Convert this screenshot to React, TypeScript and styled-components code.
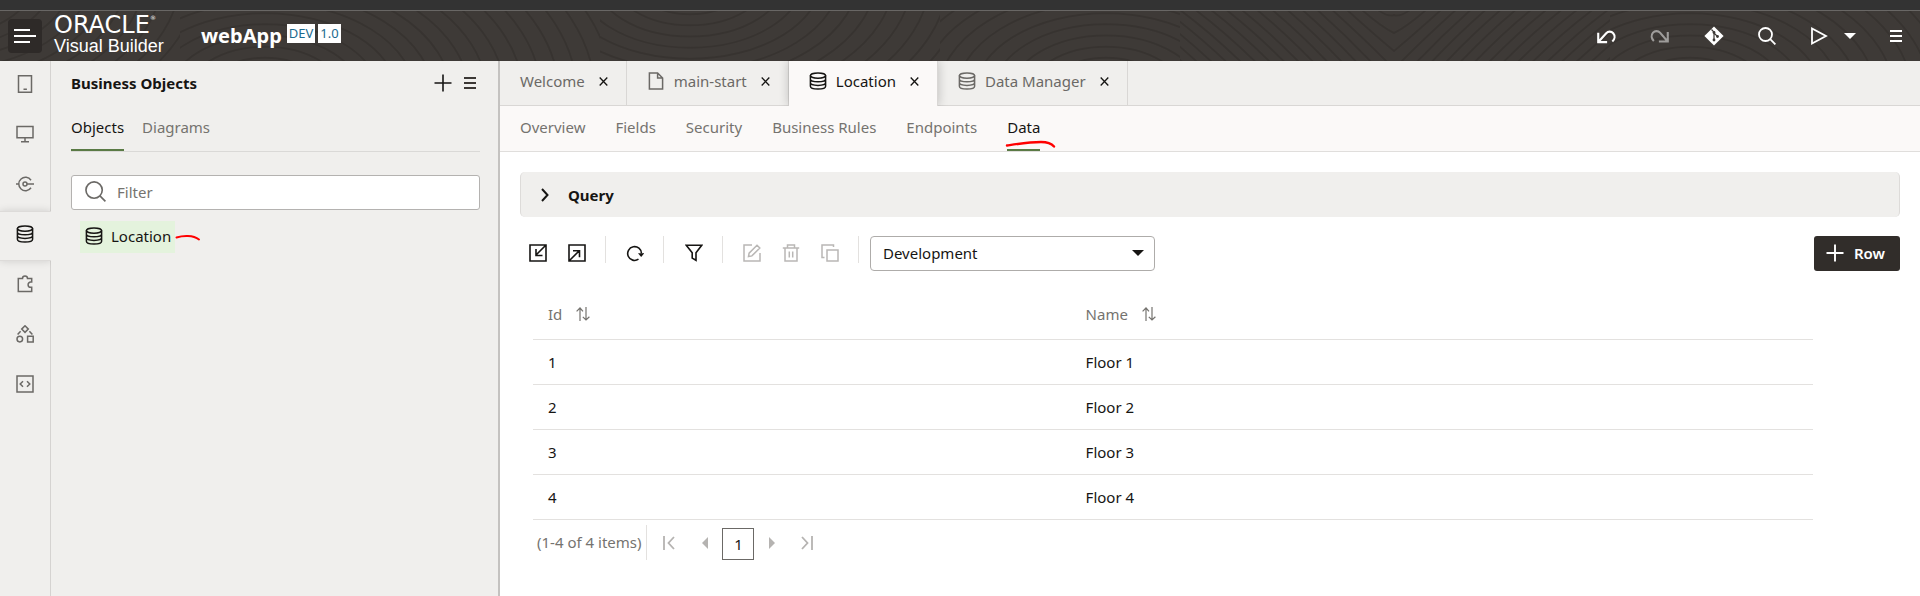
import React, { useState } from "react";
import styled, { createGlobalStyle, css } from "styled-components";

const GlobalStyle = createGlobalStyle`
  *, *::before, *::after { box-sizing: border-box; }
  body { margin: 0; background: #fff; }
  body, button, input, select {
    font-family: "Noto Sans", "Open Sans", sans-serif;
    font-size: 15px;
    line-height: 20px;
    color: #161513;
  }
  button { border: 0; padding: 0; background: none; cursor: pointer; }
  button:disabled { cursor: default; }
  svg { display: block; flex: none; }
  a { text-decoration: none; color: inherit; }
`;

const Page = styled.div`
  display: flex;
  flex-direction: column;
  min-height: 100vh;
`;

const TopStrip = styled.div`
  height: 11px;
  background: #333;
  border-bottom: 1px solid #696765;
`;

const Header = styled.header`
  position: relative;
  display: flex;
  align-items: center;
  height: 50px;
  padding: 0 18px 0 8px;
  background: #3e3a37;
  color: #fff;
`;

const Waves = styled.svg`
  position: absolute;
  inset: 0;
  width: 100%;
  height: 100%;
`;

const MenuButton = styled.button`
  position: relative;
  display: grid;
  place-items: center;
  width: 34px;
  height: 34px;
  border-radius: 4px;
  background: #2e2a28;
`;

const Brand = styled.a`
  position: relative;
  display: flex;
  flex-direction: column;
  width: 112px;
  margin-left: 12px;
  padding-bottom: 2px;
`;

const BrandName = styled.span`
  display: flex;
  font-family: "DejaVu Sans", sans-serif;
  font-size: 24px;
  line-height: 22px;
  color: #fff;
  sup { font-size: 6px; line-height: 8px; }
`;

const BrandProduct = styled.span`
  font-family: "Liberation Sans", sans-serif;
  font-size: 18px;
  line-height: 20px;
  white-space: nowrap;
`;

const AppName = styled.h1`
  position: relative;
  margin: 0 5px 0 35px;
  font-size: 20px;
  line-height: 28px;
  font-weight: 700;
`;

const Badges = styled.div`
  position: relative;
  display: flex;
  gap: 3px;
  padding-bottom: 5px;
`;

const Badge = styled.span`
  padding: 0 2px;
  background: #fff;
  color: #1c6a8e;
  font-size: 13px;
  line-height: 19px;
`;

const HeaderActions = styled.div`
  position: relative;
  display: flex;
  align-items: center;
  margin-left: auto;
  gap: 34px;
`;

const RunGroup = styled.div`
  display: flex;
  align-items: center;
  gap: 16px;
`;

const IconButton = styled.button<{ $dim?: boolean; $tone?: string }>`
  display: grid;
  place-items: center;
  color: ${(p) => p.$tone ?? "#fff"};
  opacity: ${(p) => (p.$dim ? 0.5 : 1)};
`;

const Body = styled.div`
  display: flex;
  flex: 1;
`;

const Rail = styled.nav`
  display: flex;
  flex-direction: column;
  width: 51px;
  background: #f0efed;
  border-right: 1px solid #d5d3d1;
`;

const RailButton = styled.button<{ $active?: boolean }>`
  display: grid;
  place-items: center;
  height: 50px;
  padding-bottom: 4px;
  color: #6b6966;
  ${(p) =>
    p.$active &&
    css`
      margin-right: -1px;
      padding-right: 1px;
      color: #161513;
      background: #f0efed;
      border-top: 1px solid #dddbd9;
      border-bottom: 1px solid #dddbd9;
      box-shadow: 0 0 8px rgba(0, 0, 0, 0.14);
      clip-path: inset(-10px 0 -10px 0);
    `}
`;

const Sidebar = styled.aside`
  width: 449px;
  padding: 0 18px 0 20px;
  background: #f0efed;
  border-right: 2px solid #c4c2c0;
`;

const SidebarHead = styled.div`
  display: flex;
  align-items: center;
  gap: 12px;
  height: 45px;
  padding: 0 4px 2px 0;
`;

const SidebarTitle = styled.h2`
  flex: 1;
  margin: 0;
  font-size: 15px;
  line-height: 20px;
  font-weight: 700;
`;

const TabRow = styled.div<{ $gap: number }>`
  display: flex;
  align-items: stretch;
  gap: ${(p) => p.$gap}px;
  height: 46px;
  border-bottom: 1px solid #dad9d7;
`;

const LineTab = styled.button<{ $active?: boolean }>`
  padding-bottom: 1px;
  color: ${(p) => (p.$active ? "#161513" : "#75736f")};
  border-bottom: 2px solid ${(p) => (p.$active ? "#5a7a45" : "transparent")};
`;

const FilterBox = styled.label`
  display: flex;
  align-items: center;
  gap: 11px;
  height: 35px;
  margin-top: 23px;
  padding: 0 13px 2px;
  background: #fff;
  border: 1px solid #b4b2b0;
  border-radius: 3px;
  color: #6b6966;
  input {
    flex: 1;
    min-width: 0;
    border: 0;
    padding: 0;
    outline: 0;
    background: none;
  }
  input::placeholder { color: #75736f; opacity: 1; }
`;

const ObjectRow = styled.div`
  display: flex;
  align-items: center;
  margin: 11px 0 0 9px;
`;

const ObjectLink = styled.a`
  display: flex;
  align-items: center;
  gap: 8px;
  height: 32px;
  padding: 0 4px 3px 5px;
  background: #e4f3dd;
`;

const Main = styled.main`
  flex: 1;
  min-width: 0;
  background: #fff;
`;

const FileTabs = styled.div`
  display: flex;
  height: 45px;
  background: #f0efed;
  border-bottom: 1px solid #d9d7d5;
`;

const FileTab = styled.div<{ $active?: boolean }>`
  display: flex;
  align-items: center;
  gap: 14px;
  padding: 0 18px 4px 20px;
  color: #6b6966;
  border-right: 1px solid #d9d7d5;
  ${(p) =>
    p.$active &&
    css`
      height: 45px;
      padding-bottom: 5px;
      color: #161513;
      background: #fbf9f8;
      box-shadow: 0 0 10px rgba(0, 0, 0, 0.22);
      clip-path: inset(0 -10px 0 -10px);
    `}
`;

const FileTabLabel = styled.button`
  display: flex;
  align-items: center;
  gap: 9px;
  color: inherit;
`;

const SubNav = styled.div`
  padding: 0 20px;
  background: #fbf9f8;
  border-bottom: 1px solid #e0dedc;
  ${TabRow} { border: 0; height: 45px; }
`;

const MarkedTab = styled.div`
  position: relative;
  display: flex;
`;

const TabMark = styled.svg`
  position: absolute;
  left: -2px;
  bottom: 2px;
`;

const Content = styled.section`
  padding: 20px;
`;

const QueryPanel = styled.button`
  display: flex;
  align-items: center;
  gap: 19px;
  width: 100%;
  height: 45px;
  padding: 0 20px;
  background: #f0efed;
  border: 0 solid #dddbd9;
  border-width: 0 1px;
  border-radius: 5px;
  font-weight: 700;
`;

const Toolbar = styled.div`
  display: flex;
  align-items: center;
  height: 35px;
  margin-top: 19px;
  padding-left: 9px;
`;

const ToolGroup = styled.div`
  display: flex;
  align-items: center;
  gap: 21px;
  height: 35px;
  padding: 0 19px 2px 0;
`;

const Divider = styled.span<{ $after: number }>`
  align-self: flex-start;
  width: 1px;
  height: 27px;
  margin-right: ${(p) => p.$after}px;
  background: #e3e1df;
`;

const SelectWrap = styled.div`
  position: relative;
  width: 285px;
  svg { position: absolute; right: 11px; top: 14px; pointer-events: none; }
`;

const Select = styled.select`
  appearance: none;
  width: 100%;
  height: 35px;
  padding: 0 12px 2px;
  background: #fff;
  border: 1px solid #aeacaa;
  border-radius: 4px;
`;

const AddRow = styled.button`
  display: flex;
  align-items: center;
  gap: 10px;
  height: 35px;
  margin-left: auto;
  padding: 0 15px 2px 12px;
  background: #312d2a;
  border-radius: 3px;
  color: #fff;
  font-weight: 600;
`;

const TableWrap = styled.div`
  margin: 23px 87px 0 13px;
`;

const Table = styled.table`
  width: 100%;
  table-layout: fixed;
  border-collapse: collapse;
  th, td {
    height: 45px;
    padding: 0 15px;
    text-align: left;
    border-bottom: 1px solid #e3e1df;
  }
  th { padding-bottom: 4px; font-weight: 400; }
  th:first-child { width: 42%; }
`;

const SortHead = styled.button`
  display: flex;
  align-items: center;
  gap: 14px;
  color: #75736f;
`;

const Pager = styled.div`
  display: flex;
  align-items: center;
  height: 35px;
  margin-top: 5px;
  padding-left: 4px;
  color: #75736f;
`;

const PagerCount = styled.span`
  display: flex;
  align-items: center;
  height: 35px;
  padding-right: 5px;
  border-right: 1px solid #e3e1df;
  white-space: nowrap;
`;

const PagerStep = styled.button<{ $w: number }>`
  display: grid;
  place-items: center;
  width: ${(p) => p.$w}px;
  height: 35px;
  padding-top: 2px;
  color: #b5b3b1;
`;

const PagerCurrent = styled.button`
  width: 32px;
  height: 32px;
  margin: 3px 4px 0;
  border: 1px solid #6b6966;
  color: #161513;
`;

type IconProps = { size?: number; w?: number; children: React.ReactNode };

const Icon = ({ size = 18, w = 1.5, children }: IconProps) => (
  <svg width={size} height={size} viewBox="0 0 18 18" fill="none" stroke="currentColor" strokeWidth={w} aria-hidden="true">
    {children}
  </svg>
);

const Database = () => (
  <Icon>
    <ellipse cx="9" cy="3.6" rx="7.6" ry="2.6" />
    <path d="M1.4 3.6v10.6c0 1.6 3.4 2.8 7.6 2.8s7.6-1.2 7.6-2.8V3.6M1.4 7c0 1.6 3.4 2.8 7.6 2.8s7.6-1.2 7.6-2.8M1.4 10.6c0 1.6 3.4 2.8 7.6 2.8s7.6-1.2 7.6-2.8" />
  </Icon>
);

const Plus = ({ w = 1.6 }: { w?: number }) => (
  <Icon w={w}><path d="M9 .5v17M.5 9h17" /></Icon>
);

const Burger = () => (
  <svg width="12" height="12" viewBox="0 0 12 12" fill="currentColor" aria-hidden="true">
    <path d="M0 0h12v2H0zM0 5h12v2H0zM0 10h12v2H0z" />
  </svg>
);

const Close = () => (
  <svg width="9" height="9" viewBox="0 0 9 9" stroke="currentColor" strokeWidth="1.3" aria-hidden="true">
    <path d="M.7.5l7.6 8M8.3.5l-7.6 8" />
  </svg>
);

const Caret = () => (
  <svg width="12" height="6" viewBox="0 0 12 6" fill="currentColor" aria-hidden="true">
    <path d="M0 0h12L6 6z" />
  </svg>
);

const Sort = () => (
  <svg width="14" height="14" viewBox="0 0 14 14" fill="none" stroke="currentColor" strokeWidth="1.2" aria-hidden="true">
    <path d="M4 14V1M.6 4.4L4 1l3 3.4M10 0v13M6.8 9.8L10 13l3.4-3.2" />
  </svg>
);

const rings = Array.from({ length: 24 }, (_, i) => 24 + i * 18);

// One stretch of the header's contour lines: a dome, a bowl or a valley.
const Contour = ({ from, to, at, kind }: { from: number; to: number; at: number; kind: "dome" | "bowl" | "valley" }) => (
  <svg x={from} width={to - from} height="50" viewBox={`${from} 0 ${to - from} 50`}>
    {rings.map((r) =>
      kind === "valley" ? (
        <path key={r} d={`M${at - r - 40} -50Q${at - r * 0.6} 10 ${at} ${r - 20}Q${at + r * 0.6} 10 ${at + r + 40} -50`} />
      ) : (
        <ellipse key={r} cx={at} cy={kind === "dome" ? 84 : -34} rx={r} ry={r * 0.62} />
      ),
    )}
  </svg>
);

const Contours = () => (
  <Waves aria-hidden="true">
    <defs>
      <pattern id="contours" width="1920" height="50" patternUnits="userSpaceOnUse">
        <g fill="none" stroke="#373330" strokeWidth="2">
          <Contour from={0} to={180} at={-60} kind="bowl" />
          <Contour from={180} to={600} at={265} kind="dome" />
          <Contour from={600} to={940} at={690} kind="bowl" />
          <Contour from={940} to={1180} at={1106} kind="dome" />
          <Contour from={1180} to={1610} at={1394} kind="valley" />
          <Contour from={1610} to={1920} at={1690} kind="dome" />
        </g>
      </pattern>
    </defs>
    <rect width="100%" height="100%" fill="url(#contours)" />
  </Waves>
);

const railItems = [
  { name: "Mobile Applications", icon: <Icon><path d="M2.5.8h13v16.4h-13zM7.5 14.3h3.4" /></Icon> },
  { name: "Web Applications", icon: <Icon><path d="M1 1.5h16v11.2H1zM9 12.7v4M5 16.8h8" /></Icon> },
  {
    name: "Services",
    icon: (
      <Icon>
        <path d="M15 5.2a6.7 6.7 0 1 0 0 7.6M0 9h2.5M11 9h7" />
        <circle cx="9" cy="9" r="2" />
      </Icon>
    ),
  },
  { name: "Business Objects", icon: <Database /> },
  {
    name: "Components",
    icon: <Icon><path d="M2.3 3.5h4.2a2.5 2.5 0 0 1 5 0h4.2v3.6h-1a2.6 2.6 0 0 0 0 5.2h1v4.3H2.3z" /></Icon>,
  },
  {
    name: "Processes",
    icon: (
      <Icon>
        <path d="M9 .8l3.3 3.3L9 7.4 5.7 4.1zM11.6 11.3h5.6v5.6h-5.6zM4.6 6.2L1.6 9.6M13.4 6.2l3 3.4" />
        <circle cx="3.8" cy="14.1" r="2.8" />
      </Icon>
    ),
  },
  { name: "Source View", icon: <Icon><path d="M1 1h16v16H1zM7 6.2L4.2 9 7 11.8M11 6.2L13.8 9 11 11.8" /></Icon> },
];

const files = [
  { name: "Welcome", icon: null },
  { name: "main-start", icon: <Icon><path d="M2.4 1h8.2l5 5v11H2.4zM10.6 1v5h5" /></Icon> },
  { name: "Location", icon: <Database /> },
  { name: "Data Manager", icon: <Database /> },
];

const views = ["Overview", "Fields", "Security", "Business Rules", "Endpoints", "Data"];

const rows = [1, 2, 3, 4].map((id) => ({ id, name: `Floor ${id}` }));

const ink = "#161513";
const muted = "#b9b7b5";

export default function App() {
  const [file, setFile] = useState("Location");
  const [view, setView] = useState("Data");
  const [panel, setPanel] = useState("Objects");

  return (
    <Page>
      <GlobalStyle />
      <TopStrip />
      <Header>
        <Contours />
        <MenuButton aria-label="Menu">
          <svg width="22" height="14" viewBox="0 0 22 14" fill="#fff" aria-hidden="true">
            <path d="M0 0h16v2H0zM0 6h22v2H0zM0 12h16v2H0z" />
          </svg>
        </MenuButton>
        <Brand href="#home">
          <BrandName>ORACLE<sup>®</sup></BrandName>
          <BrandProduct>Visual Builder</BrandProduct>
        </Brand>
        <AppName>webApp</AppName>
        <Badges>
          <Badge>DEV</Badge>
          <Badge>1.0</Badge>
        </Badges>
        <HeaderActions>
          <IconButton aria-label="Undo">
            <Icon size={20} w={1.9}><path d="M2 6v8.5h8M2.3 14.2L9.2 6.5a4.2 4.2 0 0 1 6.3 0c1.9 2.2 1.5 5.3-.8 7.5" /></Icon>
          </IconButton>
          <IconButton aria-label="Redo" disabled $dim>
            <Icon size={20} w={1.9}><path d="M16 5.5V14H8M15.7 13.7L9 6a4.2 4.2 0 0 0-6.3 0c-1.9 2.2-1.5 5.3.8 7.5" /></Icon>
          </IconButton>
          <IconButton aria-label="Git">
            <svg width="20" height="20" viewBox="0 0 20 20" aria-hidden="true">
              <path d="M10 .4l9.6 9.6L10 19.6.4 10z" fill="#fff" />
              <path d="M7.5 3.5l2.5 2.7v8M10 7l3.6 3.6" stroke="#3c3835" strokeWidth="1.2" fill="none" />
              <circle cx="10" cy="6.5" r="1.4" fill="#3c3835" />
              <circle cx="10" cy="14" r="1.4" fill="#3c3835" />
              <circle cx="13.5" cy="10.5" r="1.4" fill="#3c3835" />
            </svg>
          </IconButton>
          <IconButton aria-label="Search">
            <Icon w={1.8}><circle cx="7.5" cy="7.5" r="6.5" /><path d="M12.2 12.2l5.2 5.2" /></Icon>
          </IconButton>
          <RunGroup>
            <IconButton aria-label="Preview">
              <Icon w={1.8}><path d="M2 1.5v15L16 9z" /></Icon>
            </IconButton>
            <IconButton aria-label="Run options"><Caret /></IconButton>
          </RunGroup>
          <IconButton aria-label="More"><Burger /></IconButton>
        </HeaderActions>
      </Header>

      <Body>
        <Rail>
          {railItems.map((item) => (
            <RailButton key={item.name} aria-label={item.name} $active={item.name === "Business Objects"}>
              {item.icon}
            </RailButton>
          ))}
        </Rail>

        <Sidebar>
          <SidebarHead>
            <SidebarTitle>Business Objects</SidebarTitle>
            <IconButton aria-label="Add" $tone={ink}><Plus /></IconButton>
            <IconButton aria-label="Options" $tone="#3c3835"><Burger /></IconButton>
          </SidebarHead>
          <TabRow $gap={18}>
            {["Objects", "Diagrams"].map((name) => (
              <LineTab key={name} $active={name === panel} onClick={() => setPanel(name)}>{name}</LineTab>
            ))}
          </TabRow>
          <FilterBox>
            <Icon size={21} w={1.4}><circle cx="7.8" cy="7.8" r="7" /><path d="M12.8 12.8l4.7 4.7" /></Icon>
            <input type="text" placeholder="Filter" aria-label="Filter" />
          </FilterBox>
          <ObjectRow>
            <ObjectLink href="#location"><Database />Location</ObjectLink>
            <svg width="26" height="10" viewBox="0 0 26 10" fill="none" stroke="#f00" strokeWidth="2" strokeLinecap="round" aria-hidden="true">
              <path d="M1.5 5.5C8 3.5 18 3 24 7.5" />
            </svg>
          </ObjectRow>
        </Sidebar>

        <Main>
          <FileTabs>
            {files.map((f) => (
              <FileTab key={f.name} $active={f.name === file}>
                <FileTabLabel onClick={() => setFile(f.name)}>{f.icon}{f.name}</FileTabLabel>
                <IconButton aria-label={`Close ${f.name}`} $tone={ink}><Close /></IconButton>
              </FileTab>
            ))}
          </FileTabs>
          <SubNav>
            <TabRow $gap={30}>
              {views.map((name) => (
                <MarkedTab key={name}>
                  <LineTab $active={name === view} onClick={() => setView(name)}>{name}</LineTab>
                  {name === "Data" && (
                    <TabMark width="52" height="9" viewBox="0 0 52 9" fill="none" stroke="#f00" strokeWidth="2.4" strokeLinecap="round" aria-hidden="true">
                      <path d="M2 5.5C12 4 24 2 36 2c6 0 10 1 13 4.5" />
                    </TabMark>
                  )}
                </MarkedTab>
              ))}
            </TabRow>
          </SubNav>

          <Content>
            <QueryPanel aria-expanded="false">
              <svg width="8" height="14" viewBox="0 0 8 14" fill="none" stroke="currentColor" strokeWidth="2" aria-hidden="true">
                <path d="M1 1l5.5 6L1 13" />
              </svg>
              Query
            </QueryPanel>

            <Toolbar>
              <ToolGroup>
                <IconButton aria-label="Import" $tone={ink}>
                  <Icon w={1.6}><path d="M1 1h16v16H1zM16.5 1.5L7.5 10.5M7 5v6.5h6.5" /></Icon>
                </IconButton>
                <IconButton aria-label="Export" $tone={ink}>
                  <Icon w={1.6}><path d="M1 1h16v16H1zM1.5 16.5L11 7M5 6.8h6.5v6.5" /></Icon>
                </IconButton>
              </ToolGroup>
              <Divider $after={20} />
              <ToolGroup>
                <IconButton aria-label="Refresh" $tone={ink}>
                  <Icon w={1.6}><path d="M12.5 15.2a6.9 6.9 0 1 1 3-5.7" /><path d="M12 9.3h6.2L15.2 13z" fill="currentColor" stroke="none" /></Icon>
                </IconButton>
              </ToolGroup>
              <Divider $after={21} />
              <ToolGroup>
                <IconButton aria-label="Filter rows" $tone={ink}>
                  <Icon w={1.6}><path d="M1.3 1.3h15.4L11 8.8v7.5l-3.8-2.2V8.8z" /></Icon>
                </IconButton>
              </ToolGroup>
              <Divider $after={20} />
              <ToolGroup>
                <IconButton aria-label="Edit" disabled $tone={muted}>
                  <Icon><path d="M9 1H1v16h16V9M5.5 12.5l.6-3.4L14 1.2l2.8 2.8-7.9 7.9z" /></Icon>
                </IconButton>
                <IconButton aria-label="Delete" disabled $tone={muted}>
                  <Icon><path d="M.8 4h16.4M3 4v13h12V4M5.5 4V1h7v3M7.3 7.5v6M10.7 7.5v6" /></Icon>
                </IconButton>
                <IconButton aria-label="Duplicate" disabled $tone={muted}>
                  <Icon><path d="M6 6h11v11H6zM12.5 3V1H1v12.5h2.5" /></Icon>
                </IconButton>
              </ToolGroup>
              <Divider $after={11} />
              <SelectWrap>
                <Select aria-label="Database" defaultValue="Development">
                  <option>Development</option>
                  <option>Staging</option>
                  <option>Live</option>
                </Select>
                <Caret />
              </SelectWrap>
              <AddRow><Plus w={1.9} />Row</AddRow>
            </Toolbar>

            <TableWrap>
              <Table>
                <thead>
                  <tr>
                    <th scope="col"><SortHead>Id<Sort /></SortHead></th>
                    <th scope="col"><SortHead>Name<Sort /></SortHead></th>
                  </tr>
                </thead>
                <tbody>
                  {rows.map((r) => (
                    <tr key={r.id}><td>{r.id}</td><td>{r.name}</td></tr>
                  ))}
                </tbody>
              </Table>
              <Pager>
                <PagerCount>(1-4 of 4 items)</PagerCount>
                <PagerStep $w={44} aria-label="First page" disabled>
                  <svg width="12" height="14" viewBox="0 0 12 14" fill="none" stroke="currentColor" strokeWidth="1.8"><path d="M1 0v14M11 1L5.5 7l5.5 6" /></svg>
                </PagerStep>
                <PagerStep $w={27} aria-label="Previous page" disabled>
                  <svg width="6" height="12" viewBox="0 0 6 12" fill="currentColor"><path d="M6 0v12L0 6z" /></svg>
                </PagerStep>
                <PagerCurrent aria-current="page">1</PagerCurrent>
                <PagerStep $w={27} aria-label="Next page" disabled>
                  <svg width="6" height="12" viewBox="0 0 6 12" fill="currentColor"><path d="M0 0v12l6-6z" /></svg>
                </PagerStep>
                <PagerStep $w={44} aria-label="Last page" disabled>
                  <svg width="12" height="14" viewBox="0 0 12 14" fill="none" stroke="currentColor" strokeWidth="1.8"><path d="M11 0v14M1 1l5.5 6L1 13" /></svg>
                </PagerStep>
              </Pager>
            </TableWrap>
          </Content>
        </Main>
      </Body>
    </Page>
  );
}
